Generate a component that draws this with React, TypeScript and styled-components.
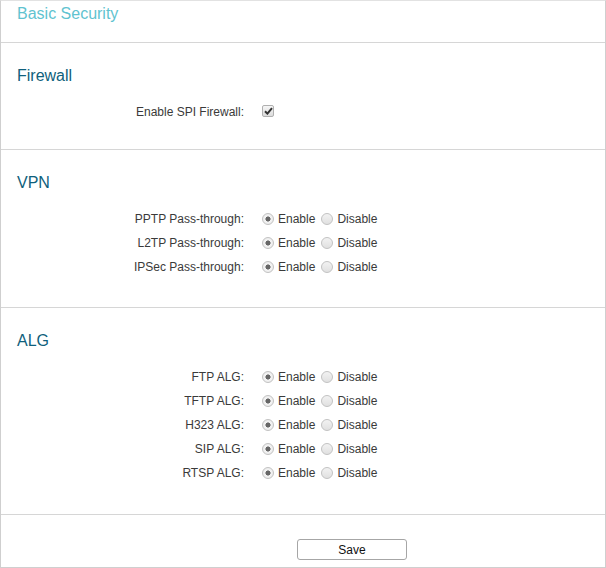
import React from 'react'
import styled, { createGlobalStyle } from 'styled-components'

const GlobalStyle = createGlobalStyle`
	html, body {
		margin: 0;
		padding: 0;
		background: #fff;
	}
	body {
		font-family: 'Liberation Sans', Arial, sans-serif;
		font-size: 12px;
		color: #333;
	}
`

const Panel = styled.div`
	box-sizing: border-box;
	width: 606px;
	height: 568px;
	border: 1px solid #cfcfcf;
	border-top-color: #e2e2e2;
	background: #fff;
`

const TitleBar = styled.div`
	height: 40px;
	padding: 1px 16px 0;
	border-bottom: 1px solid #d6d6d6;
	box-sizing: content-box;
`

const Title = styled.h1`
	margin: 0;
	font-size: 16px;
	font-weight: normal;
	line-height: 24px;
	color: #5fc3d0;
`

const Section = styled.section<{ $tail: number }>`
	padding: 21px 0 ${(p) => p.$tail}px;
	border-bottom: 1px solid #d6d6d6;
`

const SectionTitle = styled.h2`
	margin: 0 0 11px 16px;
	font-size: 16px;
	font-weight: normal;
	line-height: 24px;
	color: #0f5f7c;
`

const Row = styled.div`
	display: flex;
	align-items: center;
	box-sizing: border-box;
	height: 24px;
	padding-top: 2px;
`

const Label = styled.div`
	width: 243px;
	text-align: right;
	color: #3a3a3a;
	line-height: 22px;
`

const Controls = styled.div`
	display: flex;
	align-items: center;
	margin-left: 18px;
`

const Option = styled.label`
	display: flex;
	align-items: center;
	gap: 4px;
	margin-right: 6px;
	color: #3a3a3a;
	cursor: pointer;
`

const RadioDot = styled.span<{ $on: boolean }>`
	box-sizing: border-box;
	width: 12px;
	height: 12px;
	border-radius: 50%;
	border: 1px solid #c2c2c2;
	background: ${(p) =>
		p.$on
			? 'radial-gradient(circle, #666 0 2.3px, #f4f4f4 2.8px, #e6e6e6 100%)'
			: 'linear-gradient(#f2f2f2, #e0e0e0)'};
`

const CheckBox = styled.span`
	box-sizing: border-box;
	display: flex;
	align-items: center;
	justify-content: center;
	width: 12px;
	height: 12px;
	border-radius: 2px;
	border: 1px solid #b0b0b0;
	background: linear-gradient(#f6f6f6, #dcdcdc);
	margin-top: -3px;
`

const Footer = styled.div`
	padding-top: 24px;
`

const SaveButton = styled.button`
	box-sizing: border-box;
	margin-left: 296px;
	width: 110px;
	height: 21px;
	padding: 1px 0 0;
	border: 1px solid #a6a6a6;
	border-radius: 3px;
	background: #fff;
	font-family: 'Liberation Sans', Arial, sans-serif;
	font-size: 12px;
	color: #111;
	cursor: pointer;
`

interface ToggleRowProps {
	label: string
}

const ToggleRow = ({ label }: ToggleRowProps) => (
	<Row>
		<Label>{label}:</Label>
		<Controls>
			<Option>
				<RadioDot $on />
				Enable
			</Option>
			<Option>
				<RadioDot $on={false} />
				Disable
			</Option>
		</Controls>
	</Row>
)

const vpnRows = ['PPTP Pass-through', 'L2TP Pass-through', 'IPSec Pass-through']
const algRows = ['FTP ALG', 'TFTP ALG', 'H323 ALG', 'SIP ALG', 'RTSP ALG']

const App = () => {
	return (
		<>
			<GlobalStyle />
			<Panel>
				<TitleBar>
					<Title>Basic Security</Title>
				</TitleBar>

				<Section $tail={26}>
					<SectionTitle>Firewall</SectionTitle>
					<Row>
						<Label>Enable SPI Firewall:</Label>
						<Controls>
							<CheckBox>
								<svg width="9" height="8" viewBox="0 0 9 8">
									<path d="M1 4.2 L3.4 6.6 L8 1.2" fill="none" stroke="#333" strokeWidth="2" />
								</svg>
							</CheckBox>
						</Controls>
					</Row>
				</Section>

				<Section $tail={29}>
					<SectionTitle>VPN</SectionTitle>
					{vpnRows.map((r) => (
						<ToggleRow key={r} label={r} />
					))}
				</Section>

				<Section $tail={30}>
					<SectionTitle>ALG</SectionTitle>
					{algRows.map((r) => (
						<ToggleRow key={r} label={r} />
					))}
				</Section>

				<Footer>
					<SaveButton>Save</SaveButton>
				</Footer>
			</Panel>
		</>
	)
}

export default App
